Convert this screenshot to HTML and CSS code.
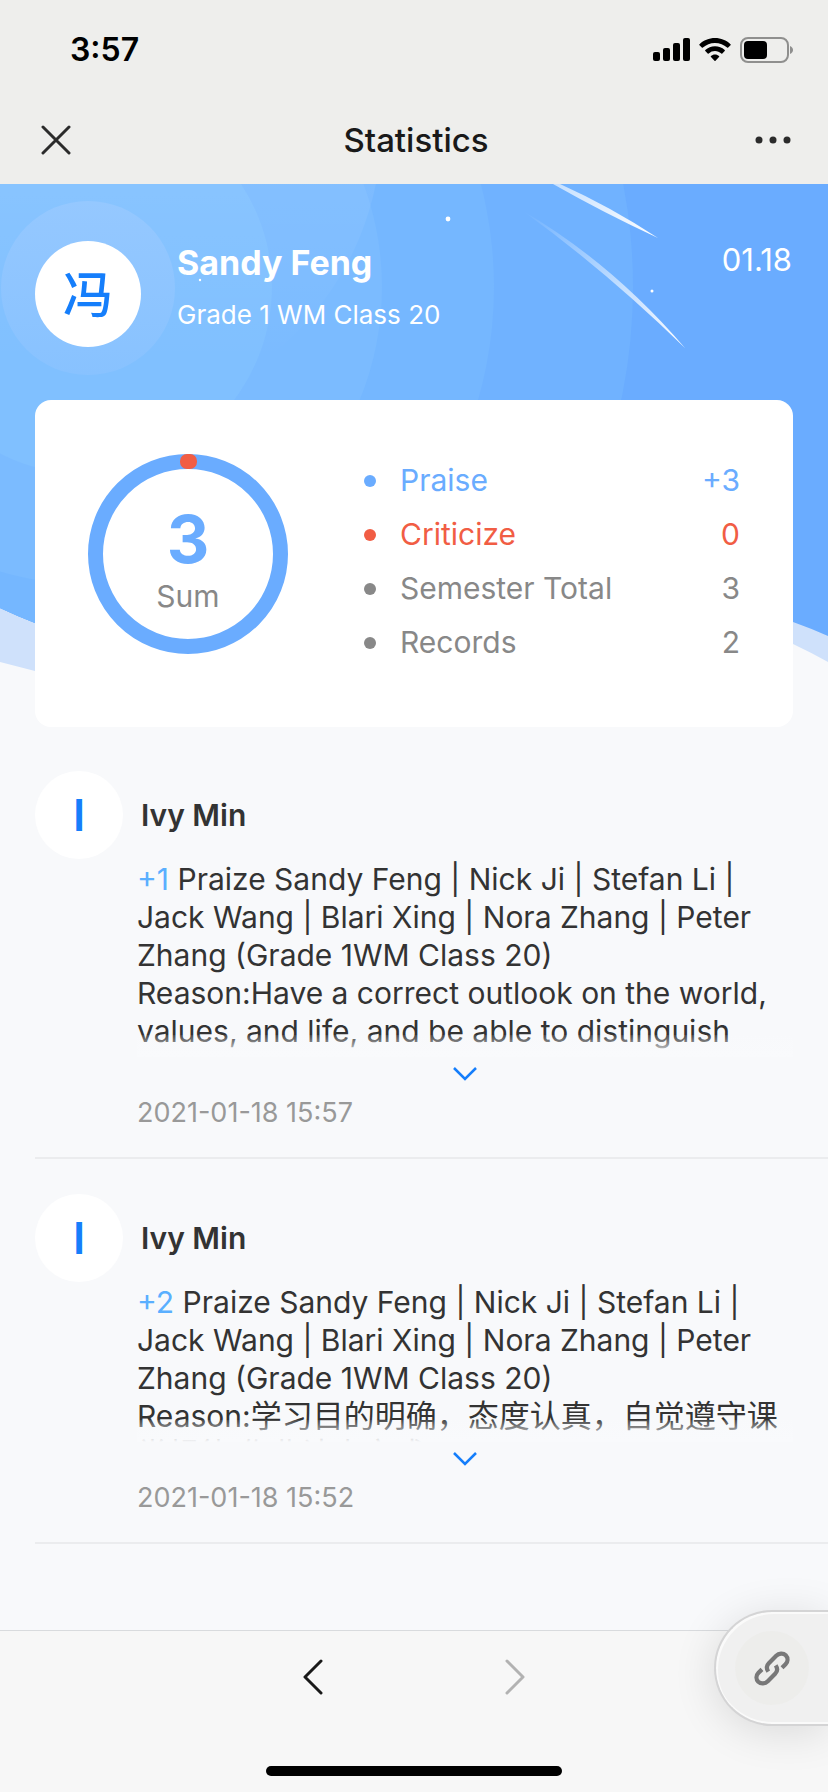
FILE: index.html
```html
<!DOCTYPE html>
<html lang="en">
<head>
<meta charset="utf-8">
<meta name="viewport" content="width=device-width, initial-scale=1">
<title>Statistics</title>
<link rel="stylesheet" href="styles.css">
</head>
<body>
<div class="app">
  <header class="top">
    <div class="status">
      <span class="clock">3:57</span>
      <div class="status-icons">
        <svg width="37" height="24" viewBox="0 0 37 24"><rect x="0" y="14" width="7" height="9" rx="2"/><rect x="10" y="10" width="7" height="13" rx="2"/><rect x="20" y="5" width="7" height="18" rx="2"/><rect x="30" y="0" width="7" height="23" rx="2"/></svg>
        <svg width="32" height="24" viewBox="0 0 32 24"><path d="M16 0C10 0 4.500 2.300.500 6.200a.800.800 0 0 0 0 1.100l2.300 2.300a.800.800 0 0 0 1.100 0A17.500 17.500 0 0 1 16 4.900c4.700 0 8.900 1.800 12.100 4.700a.800.800 0 0 0 1.100 0l2.300-2.300a.800.800 0 0 0 0-1.100C27.500 2.300 22 0 16 0z"/><path d="M16 8.300c-3.700 0-7.100 1.400-9.700 3.700a.800.800 0 0 0 0 1.100l2.400 2.400a.800.800 0 0 0 1 0A9.500 9.500 0 0 1 16 13.100c2.400 0 4.600.900 6.300 2.400a.800.800 0 0 0 1 0l2.400-2.400a.800.800 0 0 0 0-1.100A14.500 14.500 0 0 0 16 8.300z"/><path d="M16 16.500c-1.600 0-3 .600-4 1.500a.700.700 0 0 0 0 1.100l3.500 3.700a.700.700 0 0 0 1 0l3.500-3.700a.700.700 0 0 0 0-1.100c-1-.900-2.400-1.500-4-1.500z"/></svg>
        <svg width="53" height="26" viewBox="0 0 53 26"><rect x="1" y="1" width="47" height="24" rx="7" fill="none" stroke="#8f8f8e" stroke-width="2"/><rect x="4" y="4" width="23" height="18" rx="4"/><path d="M50 9c2 .800 3 2.300 3 4s-1 3.200-3 4z" fill="#8f8f8e"/></svg>
      </div>
    </div>
    <div class="navbar">
      <button class="icon-btn" aria-label="Close"><svg width="30" height="30" viewBox="0 0 30 30"><path d="M2 2l26 26M28 2L2 28" fill="none" stroke="#2b2b2b" stroke-width="3" stroke-linecap="round"/></svg></button>
      <h1 class="title">Statistics</h1>
      <button class="icon-btn" aria-label="More"><svg width="36" height="8" viewBox="0 0 36 8" fill="#2b2b2b"><circle cx="4" cy="4" r="3.500"/><circle cx="18" cy="4" r="3.500"/><circle cx="32" cy="4" r="3.500"/></svg></button>
    </div>
  </header>

  <main class="content">
    <svg class="backdrop" viewBox="0 0 828 500" preserveAspectRatio="none" aria-hidden="true">
      <defs>
        <linearGradient id="ring" x1="0" y1="0" x2="0" y2="1"><stop offset="0" stop-color="#fff" stop-opacity=".200"/><stop offset=".900" stop-color="#fff" stop-opacity="0"/></linearGradient>
        <linearGradient id="halo" x1="0" y1="0" x2="0" y2="1"><stop offset="0" stop-color="#95c8ff"/><stop offset="1" stop-color="#88c2ff"/></linearGradient>
        <linearGradient id="trail" x1="0" y1="0" x2="1" y2="1"><stop offset="0" stop-color="#fff" stop-opacity="0"/><stop offset="1" stop-color="#fff"/></linearGradient>
        <linearGradient id="trail2" x1="0" y1="0" x2="1" y2="1"><stop offset="0" stop-color="#fff" stop-opacity=".600"/><stop offset="1" stop-color="#fff"/></linearGradient>
        <clipPath id="hill"><path d="M0 0H828V452Q810 444 793 438L600 390H200L35 439Q17 432 0 424Z"/></clipPath>
      </defs>
      <path d="M0 400H828V478Q810 468 793 460L600 420L200 500L35 487L0 478Z" fill="#cfe1fb"/>
      <g clip-path="url(#hill)">
        <rect width="828" height="500" fill="#6aacff"/>
        <circle cx="85" cy="103" r="548" fill="#70b2ff"/>
        <circle cx="85" cy="103" r="409" fill="#75b7ff"/>
        <circle cx="85" cy="103" r="297" fill="#7bbbff"/>
        <circle cx="85" cy="103" r="187" fill="#80c0ff"/>
        <circle cx="85" cy="-60" r="297" fill="url(#ring)"/>
        <circle cx="88" cy="104" r="87" fill="url(#halo)"/>
      </g>
      <path d="M560 0Q611 23 658 54Q604 29 553 0Z" fill="url(#trail2)"/>
      <path d="M523 27Q612 79 685 164Q606 87 523 27Z" fill="url(#trail)"/>
      <g fill="#fff"><circle cx="448" cy="35" r="2.400"/><circle cx="652" cy="107" r="1.500"/><circle cx="200" cy="96" r="1.200"/></g>
    </svg>

    <section class="profile">
      <div class="avatar avatar-lg">冯</div>
      <div class="who">
        <h2 class="student">Sandy Feng</h2>
        <p class="grade">Grade 1 WM Class 20</p>
      </div>
      <time class="day">01.18</time>
    </section>

    <section class="card">
      <div class="gauge">
        <svg class="gauge-ring" viewBox="0 0 200 200" aria-hidden="true"><circle cx="100" cy="100" r="92.500" fill="none" stroke="#6aacff" stroke-width="15"/><rect x="92" y="0" width="17" height="15" rx="7" fill="#f15d44"/></svg>
        <strong class="sum">3</strong>
        <span class="sum-label">Sum</span>
      </div>
      <dl class="stats">
        <div class="stat praise"><dt>Praise</dt><dd>+3</dd></div>
        <div class="stat criticize"><dt>Criticize</dt><dd>0</dd></div>
        <div class="stat"><dt>Semester Total</dt><dd>3</dd></div>
        <div class="stat"><dt>Records</dt><dd>2</dd></div>
      </dl>
    </section>

    <ul class="records">
      <li class="record">
        <div class="author"><span class="avatar">I</span><h3 class="name">Ivy Min</h3></div>
        <div class="body">
          <p class="text five"><span class="points">+1</span> Praize Sandy Feng | Nick Ji | Stefan Li | Jack Wang | Blari Xing | Nora Zhang | Peter Zhang (Grade 1WM Class 20)<br>Reason:Have a correct outlook on the world, values, and life, and be able to distinguish</p>
          <button class="expand" aria-label="Expand"><svg width="24" height="14" viewBox="0 0 24 14"><path d="M1 1l11 11L23 1" fill="none" stroke="#157efb" stroke-width="2.500"/></svg></button>
          <time class="stamp">2021-01-18 15:57</time>
        </div>
      </li>
      <li class="record">
        <div class="author"><span class="avatar">I</span><h3 class="name">Ivy Min</h3></div>
        <div class="body">
          <p class="text four"><span class="points">+2</span> Praize Sandy Feng | Nick Ji | Stefan Li | Jack Wang | Blari Xing | Nora Zhang | Peter Zhang (Grade 1WM Class 20)<br>Reason:<span class="zh" lang="zh">学习目的明确，态度认真，自觉遵守课堂规律,作业认真完成</span></p>
          <button class="expand" aria-label="Expand"><svg width="24" height="14" viewBox="0 0 24 14"><path d="M1 1l11 11L23 1" fill="none" stroke="#157efb" stroke-width="2.500"/></svg></button>
          <time class="stamp">2021-01-18 15:52</time>
        </div>
      </li>
    </ul>
  </main>

  <footer class="bottom">
    <nav class="history">
      <button class="icon-btn" aria-label="Back"><svg width="20" height="36" viewBox="0 0 20 36"><path d="M18 2L2 18l16 16" fill="none" stroke="#191919" stroke-width="3" stroke-linecap="round" stroke-linejoin="round"/></svg></button>
      <button class="icon-btn" aria-label="Forward" disabled><svg width="20" height="36" viewBox="0 0 20 36"><path d="M2 2l16 16L2 34" fill="none" stroke="#b2b2b2" stroke-width="3" stroke-linecap="round" stroke-linejoin="round"/></svg></button>
    </nav>
    <div class="home-bar"></div>
    <button class="float-tab" aria-label="Link"><span class="float-disc"><svg width="38" height="38" viewBox="0 0 36 36" fill="none" stroke="#787878" stroke-width="4"><path d="M14.500 21.500C12.500 18.500 12.800 15.700 15 13.500L22 6.500C24.500 4 28.500 3.600 31 6C33.400 8.500 33.200 12 30.800 14.500L27.500 17.700"/><path d="M21.500 15.500C23.500 18.500 23.200 21.300 21 23.500L14 30.500C11.500 33 7.500 33.400 5 31C2.600 28.500 2.800 25 5.200 22.500L8.500 19.300"/></svg></span></button>
  </footer>
</div>
</body>
</html>
```
FILE: styles.css
```css
* { box-sizing: border-box; margin: 0; padding: 0; }

body {
  font-family: Inter, "Noto Sans CJK SC", sans-serif;
  background: #f8f9fb;
  color: #333;
}

button { border: 0; background: none; font: inherit; cursor: pointer; }
ul { list-style: none; }
svg { display: block; }

.app { min-height: 100vh; display: flex; flex-direction: column; }

.top { background: #eeeeec; }
.status {
  height: 96px;
  padding: 3px 35px 0 70px;
  display: flex;
  align-items: center;
  justify-content: space-between;
}
.clock { font-size: 32px; font-weight: 600; color: #000; }
.status-icons { display: flex; align-items: center; gap: 9px; }
.navbar {
  height: 88px;
  padding: 0 37px 0 41px;
  display: grid;
  grid-template-columns: 36px 1fr 36px;
  align-items: center;
}
.icon-btn { display: flex; align-items: center; justify-content: center; }
.navbar .icon-btn { justify-content: flex-start; }
.title { font-size: 33px; font-weight: 500; color: #191919; text-align: center; }

.content { position: relative; flex: 1; }
.backdrop { position: absolute; top: 0; left: 0; width: 100%; height: 500px; }

.profile {
  position: relative;
  height: 216px;
  padding: 57px 36px 0 35px;
  display: flex;
  align-items: flex-start;
  color: #fff;
}
.avatar {
  width: 88px;
  height: 88px;
  flex: none;
  border-radius: 50%;
  background: #fff;
  color: #157efb;
  display: flex;
  align-items: center;
  justify-content: center;
  font-size: 44px;
  font-weight: 600;
}
.avatar-lg { width: 106px; height: 106px; padding-bottom: 6px; font-size: 50px; font-weight: 500; }
.who { flex: 1; padding-left: 36px; }
.student { font-size: 34px; line-height: 44px; font-weight: 700; }
.grade { margin-top: 15px; font-size: 26px; line-height: 30px; }
.day { font-size: 31px; line-height: 38px; }

.card {
  position: relative;
  margin: 0 35px;
  padding: 54px 53px 57px;
  background: #fff;
  border-radius: 16px;
  display: flex;
  gap: 76px;
}
.gauge {
  position: relative;
  width: 200px;
  height: 200px;
  flex: none;
  display: flex;
  flex-direction: column;
  align-items: center;
  padding-top: 53px;
}
.gauge-ring { position: absolute; inset: 0; }
.sum { font-size: 66px; line-height: 64px; font-weight: 700; color: #6aacff; }
.sum-label { margin-top: 6px; font-size: 30px; line-height: 38px; color: #888; }
.stats { flex: 1; }
.stat {
  height: 54px;
  display: flex;
  align-items: center;
  font-size: 30px;
  line-height: 36px;
  color: #888;
}
.stat::before {
  content: "";
  width: 12px;
  height: 12px;
  margin-right: 24px;
  border-radius: 50%;
  background: currentColor;
}
.stat dt { flex: 1; }
.stat dt, .stat dd { padding-bottom: 2px; }
.stat.praise { color: #6aacff; }
.stat.criticize { color: #f15d44; }

.record { margin-left: 35px; padding-top: 35px; border-bottom: 2px solid #ebecee; }
.records { padding-top: 9px; }
.author { display: flex; align-items: center; gap: 18px; }
.name { font-size: 30px; font-weight: 600; }
.body { margin: 1px 35px 0 102px; display: flex; flex-direction: column; }
.text { position: relative; overflow: hidden; font-size: 30px; line-height: 38px; }
.zh { font-size: 31px; }
.five { height: 197px; }
.four { height: 159px; }
.text::after {
  content: "";
  position: absolute;
  left: 0;
  right: 0;
  bottom: 0;
  height: 22px;
  background: linear-gradient(rgba(249, 250, 252, 0.1), #f9fafc);
}
.points { color: #5aafff; }
.expand { height: 34px; display: flex; align-items: center; justify-content: center; }
.stamp { height: 66px; font-size: 27px; line-height: 44px; color: #999; }

.bottom {
  position: relative;
  height: 162px;
  background: #f7f7f7;
  border-top: 1px solid #d9dbde;
}
.history { height: 92px; display: flex; justify-content: center; gap: 182px; }
.home-bar { width: 296px; height: 10px; margin: 43px auto 0; border-radius: 5px; background: #000; }
.float-tab {
  position: absolute;
  right: 0;
  top: -21px;
  width: 114px;
  height: 116px;
  padding-left: 19px;
  display: flex;
  align-items: center;
  background: #f0f0f0;
  border: 2px solid #d4d4d5;
  border-right: 0;
  border-radius: 58px 0 0 58px;
  box-shadow: inset 2px 2px 0 #fafafa, inset 0 -2px 0 #fafafa, 0 6px 44px rgba(0, 0, 0, 0.12);
}
.float-disc {
  width: 74px;
  height: 74px;
  border-radius: 50%;
  background: #ededeb;
  display: flex;
  align-items: center;
  justify-content: center;
}
```
